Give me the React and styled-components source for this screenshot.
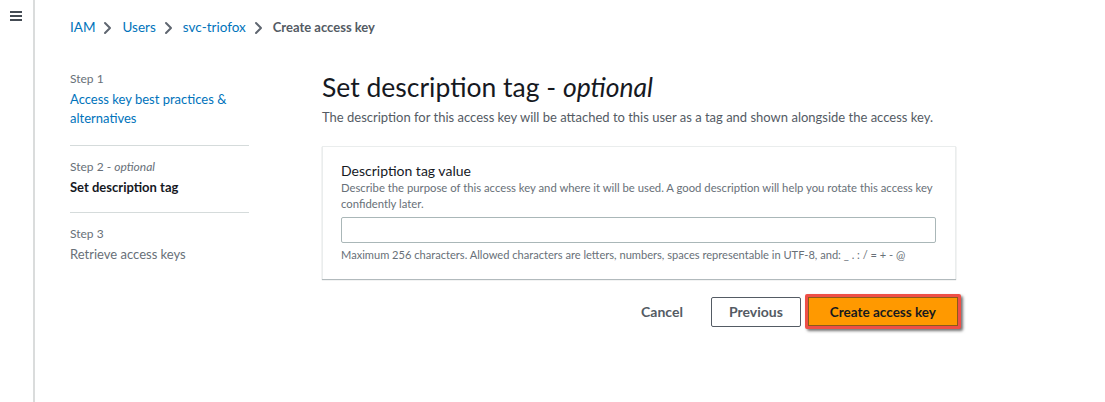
import React from "react";
import styled, { createGlobalStyle } from "styled-components";

const GlobalStyle = createGlobalStyle`
  html, body {
    margin: 0;
    padding: 0;
    background: #ffffff;
    font-family: Lato, "Open Sans", Arial, sans-serif;
  }
  * {
    box-sizing: border-box;
  }
`;

const Page = styled.div`
  display: flex;
  width: 1105px;
  height: 402px;
  overflow: hidden;
`;

const SideRail = styled.div`
  width: 35px;
  flex-shrink: 0;
  border-right: 2px solid #dadcdc;
  padding: 11px 0 0 10px;
`;

const Burger = styled.div`
  display: flex;
  flex-direction: column;
  gap: 2px;
  width: 12px;

  span {
    height: 2px;
    background: #444b53;
  }
`;

const Content = styled.div`
  flex: 1;
  padding: 17px 0 0 35px;
`;

const Crumbs = styled.nav`
  display: flex;
  align-items: center;
  height: 20px;
  font-size: 13.5px;
`;

const Crumb = styled.span`
  color: ${({ current }) => (current ? "#545b64" : "#0073bb")};
  font-weight: ${({ current }) => (current ? 700 : 400)};
  font-size: ${({ current }) => (current ? "13px" : "13.5px")};
`;

const ChevronIcon = styled.svg`
  margin: 1px 10px 0 8px;
  flex-shrink: 0;
`;

const Chevron = () => (
  <ChevronIcon width="9" height="14" viewBox="0 0 9 14">
    <path
      d="M2 2l5 5-5 5"
      fill="none"
      stroke="#5f6670"
      strokeWidth="2"
      strokeLinecap="round"
      strokeLinejoin="round"
    />
  </ChevronIcon>
);

const Body = styled.div`
  display: flex;
  gap: 73px;
  margin-top: 33px;
`;

const StepNav = styled.ol`
  list-style: none;
  margin: 0;
  padding: 0;
  width: 179px;
  flex-shrink: 0;
`;

const StepItem = styled.li`
  padding: ${({ first }) => (first ? "1px 0 17px" : "13px 0 15px")};
  border-bottom: ${({ last }) => (last ? "none" : "1px solid #d5dbdb")};
`;

const StepLabel = styled.div`
  font-size: 12px;
  line-height: 16px;
  color: #687078;

  em {
    font-style: italic;
  }
`;

const StepTitle = styled.div`
  margin-top: 3px;
  font-size: 13px;
  line-height: 19px;
  color: ${({ state }) =>
    state === "link" ? "#0073bb" : state === "active" ? "#16191f" : "#687078"};
  font-weight: ${({ state }) => (state === "active" ? 700 : 400)};
`;

const Main = styled.div`
  width: 634px;
  flex-shrink: 0;
`;

const Heading = styled.h1`
  margin: 0;
  font-size: 26.5px;
  line-height: 34px;
  font-weight: 400;
  color: #16191f;

  em {
    font-style: italic;
  }
`;

const Lead = styled.p`
  margin: 3px 0 0;
  font-size: 13px;
  line-height: 20px;
  color: #545b64;
`;

const Card = styled.section`
  margin-top: 19px;
  border: 1px solid #eaeded;
  border-bottom: none;
  box-shadow: 0 1px 1px 0 rgba(0, 28, 36, 0.3);
  padding: 15px 19px 16px 18px;
  background: #fff;
`;

const FieldLabel = styled.label`
  display: block;
  font-size: 14px;
  line-height: 18px;
  color: #16191f;
`;

const Hint = styled.div`
  font-size: ${({ below }) => (below ? "11.1px" : "11.3px")};
  line-height: 16px;
  color: #687078;
  margin-top: ${({ below }) => (below ? "4px" : "0")};
  white-space: ${({ below }) => (below ? "nowrap" : "normal")};
`;

const Input = styled.input`
  display: block;
  width: 100%;
  height: 26px;
  margin-top: 5px;
  border: 1px solid #aab7b8;
  border-radius: 2px;
  padding: 0 8px;
  font: inherit;
  font-size: 14px;
  outline: none;
`;

const Actions = styled.div`
  display: flex;
  justify-content: flex-end;
  align-items: center;
  gap: 4px;
  margin-top: 15px;
  margin-right: -5px;
`;

const LinkButton = styled.button`
  border: none;
  background: none;
  font-family: inherit;
  font-size: 14px;
  font-weight: 700;
  color: #545b64;
  padding: 0 24px 0 20px;
  height: 30px;
`;

const Button = styled.button`
  height: ${({ primary }) => (primary ? "35px" : "30px")};
  padding: 0 ${({ primary }) => (primary ? "22px" : "17px")};
  font-family: inherit;
  font-size: ${({ primary }) => (primary ? "13.5px" : "14px")};
  font-weight: 700;
  border-radius: 2px;
  background: ${({ primary }) => (primary ? "#ff9900" : "#ffffff")};
  border: ${({ primary }) =>
    primary ? "3px solid #ee4f47" : "1px solid #545b64"};
  box-shadow: ${({ primary }) =>
    primary
      ? "inset 0 0 0 1px #8a5a1a, 2px 2px 3px rgba(0, 0, 0, 0.55)"
      : "none"};
  color: ${({ primary }) => (primary ? "#16191f" : "#545b64")};
`;

const steps = [
  { label: "Step 1", title: "Access key best practices & alternatives", state: "link" },
  { label: "Step 2", optional: true, title: "Set description tag", state: "active" },
  { label: "Step 3", title: "Retrieve access keys", state: "idle" },
];

const App = () => {
  return (
    <>
      <GlobalStyle />
      <Page>
        <SideRail>
          <Burger>
            <span />
            <span />
            <span />
          </Burger>
        </SideRail>
        <Content>
          <Crumbs>
            <Crumb>IAM</Crumb>
            <Chevron />
            <Crumb>Users</Crumb>
            <Chevron />
            <Crumb>svc-triofox</Crumb>
            <Chevron />
            <Crumb current>Create access key</Crumb>
          </Crumbs>
          <Body>
            <StepNav>
              {steps.map((step, idx) => (
                <StepItem key={idx} first={idx === 0} last={idx === steps.length - 1}>
                  <StepLabel>
                    {step.label}
                    {step.optional && (
                      <>
                        {" - "}
                        <em>optional</em>
                      </>
                    )}
                  </StepLabel>
                  <StepTitle state={step.state}>{step.title}</StepTitle>
                </StepItem>
              ))}
            </StepNav>
            <Main>
              <Heading>
                Set description tag - <em>optional</em>
              </Heading>
              <Lead>
                The description for this access key will be attached to this user as a tag and
                shown alongside the access key.
              </Lead>
              <Card>
                <FieldLabel>Description tag value</FieldLabel>
                <Hint>
                  Describe the purpose of this access key and where it will be used. A good
                  description will help you rotate this access key confidently later.
                </Hint>
                <Input type="text" />
                <Hint below>
                  Maximum 256 characters. Allowed characters are letters, numbers, spaces
                  representable in UTF-8, and: _ . : / = + - @
                </Hint>
              </Card>
              <Actions>
                <LinkButton>Cancel</LinkButton>
                <Button>Previous</Button>
                <Button primary>Create access key</Button>
              </Actions>
            </Main>
          </Body>
        </Content>
      </Page>
    </>
  );
};

export default App;
